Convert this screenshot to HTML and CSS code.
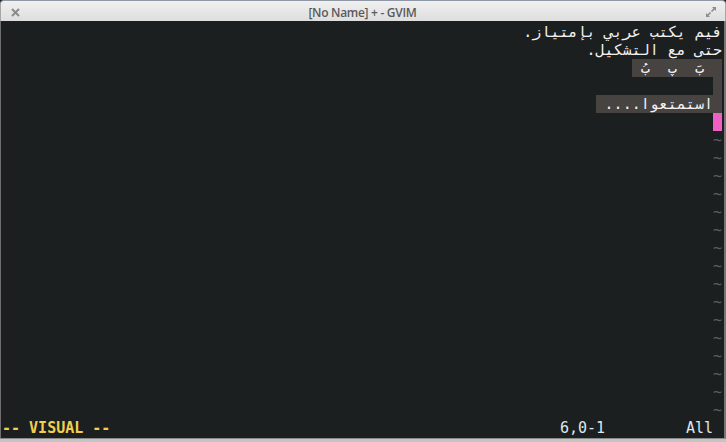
FILE: index.html
```html
<!DOCTYPE html>
<html lang="ar">
<head>
<meta charset="utf-8">
<title>GVIM</title>
<link rel="stylesheet" href="styles.css">
</head>
<body>
<div class="win">
  <div class="titlebar">
    <svg class="close" width="9" height="9" viewBox="0 0 9 9"><path d="M1 1L8 8M8 1L1 8" stroke="#8a8a8a" stroke-width="2" fill="none"/></svg>
    <div class="title">[No Name] + - GVIM</div>
    <svg class="max" width="12" height="12" viewBox="0 0 12 12"><path d="M6.5 5.5L10 2M5.5 6.5L2 10" stroke="#8c8c8c" stroke-width="1.6" fill="none"/><path d="M7 1H11V5Z M1 7V11H5Z" fill="#8c8c8c"/></svg>
  </div>
  <div class="editor">
    <div class="row rtl">فيم يكتب عربي بإمتياز.</div>
    <div class="row rtl">حتى مع التشكيل.</div>
    <div class="row rtl"><span class="vis">  بَ  پ  بُ </span></div>
    <div class="row rtl"><span class="vis"> </span></div>
    <div class="row rtl"><span class="vis"> استمتعوا.... </span></div>
    <div class="row rtl"><span class="cur"></span></div>
    <div class="row rtl tilde">~</div>
    <div class="row rtl tilde">~</div>
    <div class="row rtl tilde">~</div>
    <div class="row rtl tilde">~</div>
    <div class="row rtl tilde">~</div>
    <div class="row rtl tilde">~</div>
    <div class="row rtl tilde">~</div>
    <div class="row rtl tilde">~</div>
    <div class="row rtl tilde">~</div>
    <div class="row rtl tilde">~</div>
    <div class="row rtl tilde">~</div>
    <div class="row rtl tilde">~</div>
    <div class="row rtl tilde">~</div>
    <div class="row rtl tilde">~</div>
    <div class="row rtl tilde">~</div>
    <div class="row rtl tilde">~</div>
    <div class="row status">
      <span class="mode">-- VISUAL --</span>
      <span class="pos">6,0-1</span>
      <span class="pct">All</span>
    </div>
  </div>
  <div class="bottom"></div>
</div>
</body>
</html>
```
FILE: styles.css
```css
html, body {
  margin: 0;
  padding: 0;
  background: #1c1f20;
}
.win {
  width: 726px;
  height: 442px;
  display: flex;
  flex-direction: column;
  overflow: hidden;
}
.titlebar {
  height: 22px;
  box-sizing: border-box;
  border-top: 1px solid #8f9aa6;
  border-left: 1px solid #a6a6a6;
  border-right: 1px solid #a6a6a6;
  border-radius: 4px 4px 0 0;
  background: linear-gradient(#f0f0f0, #dedede);
  display: flex;
  align-items: center;
  padding: 0 8px 0 10px;
}
.close {
  display: block;
  margin-top: 3px;
}
.title {
  flex: 1;
  text-align: center;
  font-family: "Open Sans", "DejaVu Sans", sans-serif;
  font-size: 12px;
  font-weight: 600;
  letter-spacing: -0.3px;
  color: #5a5a5a;
  padding-top: 3px;
}
.max {
  display: block;
  margin-top: 2px;
}
.editor {
  flex: 1;
  background: #1c1f20;
  border-left: 1px solid #6f6f6f;
  border-right: 2px solid #777;
  padding: 2px 2px 1px 1px;
  font-family: "DejaVu Sans Mono", monospace;
  font-size: 15px;
  color: #f2f2f2;
}
.row {
  height: 18px;
  line-height: 18px;
  white-space: pre;
  overflow: hidden;
}
.rtl {
  direction: rtl;
  text-align: right;
}
.vis {
  display: inline-block;
  height: 18px;
  background: #464340;
}
.cur {
  display: inline-block;
  width: 9px;
  height: 18px;
  vertical-align: top;
  background: #f060c4;
}
.tilde {
  color: #5a6062;
}
.status {
  display: flex;
  direction: ltr;
}
.mode {
  width: 558px;
  color: #f0d04e;
  font-weight: bold;
}
.pos {
  width: 126px;
  color: #dfe6ee;
}
.pct {
  color: #dfe6ee;
}
.bottom {
  height: 3px;
  background: #c4c4c4;
  border-top: 1px solid #8a8a8a;
}
```
